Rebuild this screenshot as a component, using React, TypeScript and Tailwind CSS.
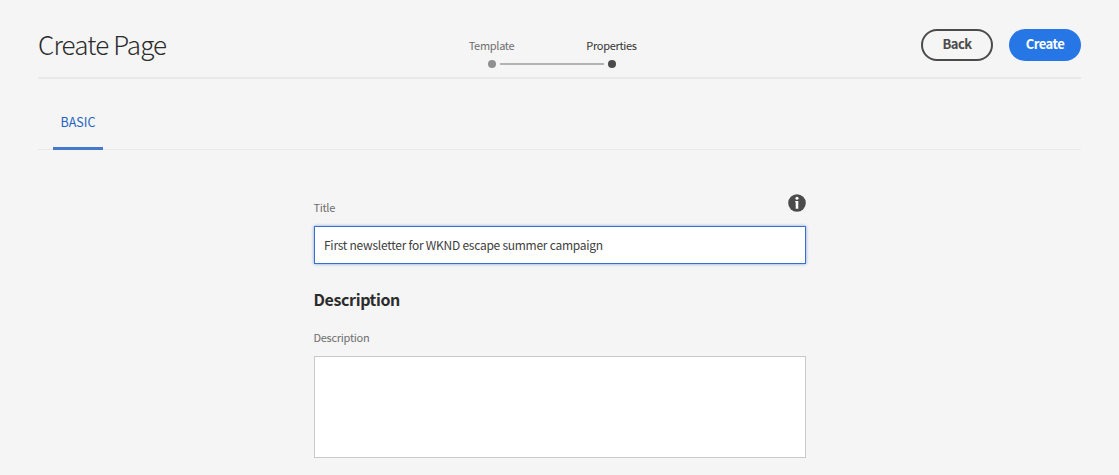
import React from "react";

function Step({ label, active = false }: { label: string; active?: boolean }) {
  return (
    <li className="flex w-[120px] flex-col items-center">
      <span
        className={`-ml-px h-4 text-[11px] leading-4 tracking-[-0.3px] whitespace-nowrap ${
          active ? "text-[#323232]" : "text-[#6e6e6e]"
        }`}
      >
        {label}
      </span>
      <span className={`mt-[7px] size-2 rounded-full ${active ? "bg-[#4b4b4b]" : "bg-[#909090]"}`} />
    </li>
  );
}

function Header() {
  return (
    <header className="grid h-[79px] grid-cols-[1fr_240px_1fr] border-b-2 border-[#e9e9e9]">
      <h1 className="mt-[25px] text-[26px] leading-[38px] font-light tracking-[-0.88px] whitespace-nowrap text-[#2c2c2c]">
        Create Page
      </h1>
      <ol className="relative -left-[7.5px] mt-[37px] flex h-[31px]">
        <Step label="Template" />
        <Step label="Properties" active />
        <li aria-hidden="true" className="absolute top-[26px] left-[68px] h-[2px] w-[104px] bg-[#b3b3b3]" />
      </ol>
      <div className="mt-[29px] flex h-8 justify-end gap-4">
        <button className="flex w-[72px] items-center justify-center rounded-full border-2 border-[#4b4b4b] pb-[2px] text-[13px] leading-4 font-bold tracking-[-0.55px] text-[#4b4b4b]">
          Back
        </button>
        <button className="flex w-[72px] items-center justify-center rounded-full bg-[#2677e5] pb-[2px] text-[13px] leading-4 font-bold tracking-[-0.55px] text-white">
          Create
        </button>
      </div>
    </header>
  );
}

function InfoIcon() {
  return (
    <svg viewBox="0 0 18 18" className="size-[18px]" aria-hidden="true">
      <circle cx="9" cy="9" r="8.8" fill="#4b4b4b" />
      <circle cx="9" cy="4.3" r="1.55" fill="#fff" />
      <path d="M7.2 7h3.1v7.8H7.7V8.2h-.5z" fill="#fff" />
    </svg>
  );
}

export default function App() {
  return (
    <div className="h-[475px] w-full overflow-hidden bg-[#f5f5f5] px-[38px] font-['Noto_Sans_CJK_SC','Noto_Sans',sans-serif]">
      <Header />
      <nav className="flex h-[71px] items-end border-b border-[#e9e9e9] pl-[15px]">
        <a className="-mb-px flex h-[48px] w-[50px] justify-center border-b-3 border-[#4479cb] pt-[10px] text-[12.5px] leading-5 text-[#2562c1]">
          BASIC
        </a>
      </nav>
      <main className="mx-auto flex w-[492px] flex-col pt-[44px]">
        <div className="flex h-8 justify-between">
          <label htmlFor="title" className="mt-[5px] text-[11px] leading-4 tracking-[-0.3px] text-[#6e6e6e]">
            Title
          </label>
          <InfoIcon />
        </div>
        <input
          id="title"
          defaultValue="First newsletter for WKND escape summer campaign"
          className="h-[38px] w-full border border-[#3a6fcb] bg-white px-[9.5px] pb-[2px] text-[12px] tracking-[-0.26px] text-[#404040] shadow-[0_0_3px_#76a0df] outline-none"
        />
        <h2 className="mt-[23px] text-[16px] leading-6 font-bold tracking-[-0.38px] text-[#2c2c2c]">Description</h2>
        <label htmlFor="description" className="mt-[18px] text-[11px] leading-4 tracking-[-0.27px] text-[#6e6e6e]">
          Description
        </label>
        <textarea
          id="description"
          className="mt-[11px] h-[102px] w-full resize-none border border-[#cacaca] bg-white outline-none"
        />
      </main>
    </div>
  );
}
